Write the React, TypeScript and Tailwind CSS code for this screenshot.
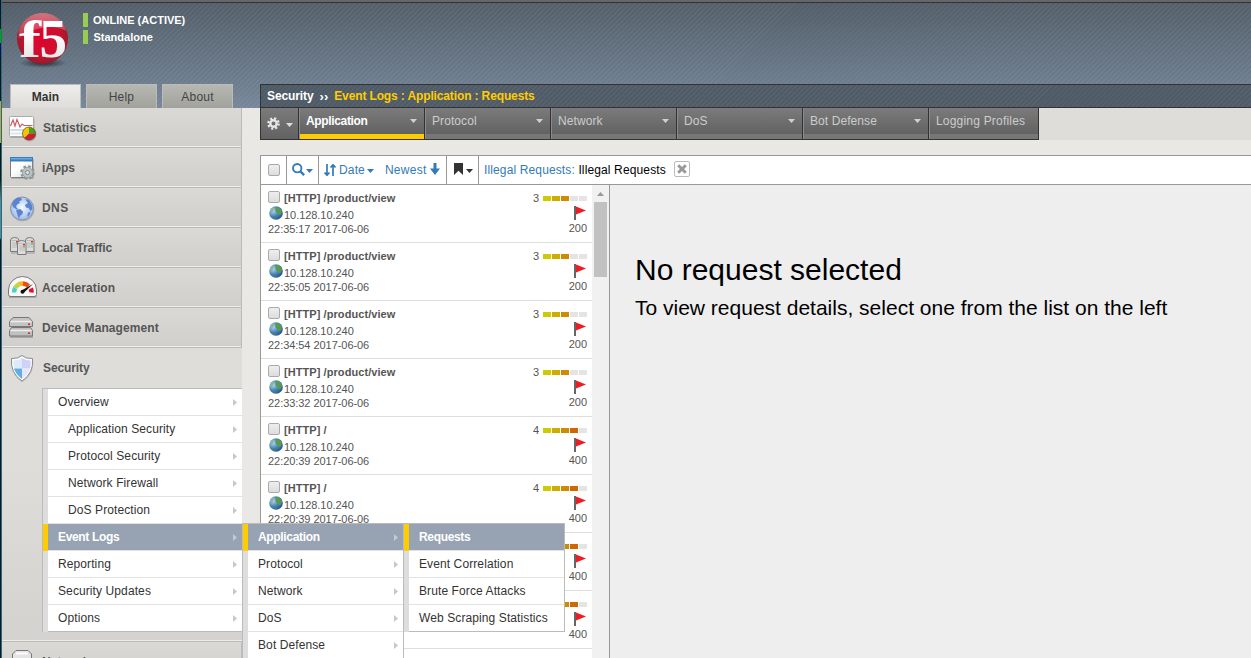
import React from "react";

const FONT = "font-['Liberation_Sans',Arial,sans-serif]";

function Logo() {
  return (
    <svg width="56" height="58" viewBox="0 0 56 58" className="block overflow-visible">
      <defs>
        <radialGradient id="ball" cx="50%" cy="48%" r="55%">
          <stop offset="0" stopColor="#e2002b" />
          <stop offset="0.6" stopColor="#cd1030" />
          <stop offset="0.9" stopColor="#a01a2c" />
          <stop offset="1" stopColor="#7c2430" />
        </radialGradient>
        <linearGradient id="gloss" x1="0" y1="0" x2="0" y2="1">
          <stop offset="0" stopColor="#fff" stopOpacity="0.4" />
          <stop offset="1" stopColor="#fff" stopOpacity="0.12" />
        </linearGradient>
        <linearGradient id="mark" x1="0" y1="0" x2="0" y2="1">
          <stop offset="0.4" stopColor="#fff" />
          <stop offset="1" stopColor="#dcdcdc" />
        </linearGradient>
        <radialGradient id="ballShadow">
          <stop offset="0" stopColor="#1d242b" stopOpacity="0.9" />
          <stop offset="1" stopColor="#1d242b" stopOpacity="0" />
        </radialGradient>
      </defs>
      <ellipse cx="28" cy="51" rx="24" ry="5" fill="url(#ballShadow)" />
      <circle cx="27.5" cy="26.5" r="25.5" fill="url(#ball)" />
      <path d="M3.500 19A25 25 0 0 1 51.500 19Q40 13 27 16Q13 18 3.500 27Z" fill="url(#gloss)" />
      <g fill="url(#mark)" fontFamily="Liberation Serif" fontWeight="700">
        <text x="4" y="44.500" fontSize="52" textLength="22" lengthAdjust="spacingAndGlyphs">f</text>
        <text x="24.500" y="44.500" fontSize="54" textLength="27.500" lengthAdjust="spacingAndGlyphs">5</text>
      </g>
    </svg>
  );
}

function StatisticsIcon() {
  return (
    <svg width="30" height="30" viewBox="0 0 30 30">
      <rect x="2" y="3" width="24.500" height="20" rx="1" fill="#00000030" />
      <rect x="1.500" y="1.500" width="24" height="20" rx="1" fill="#fff" stroke="#aaa" />
      <rect x="2.500" y="14" width="22" height="2" fill="#cfdcea" />
      <rect x="2.500" y="17.500" width="13" height="2" fill="#dbe5ef" />
      <path d="M2.500 11L5 5L7 11L9 4.500L12 12L14 9L16 10.500H24.500" fill="none" stroke="#cc5b64" strokeWidth="1.200" />
      <circle cx="21.500" cy="19.500" r="7" fill="#00000030" />
      <path d="M21 18.500V12a6.500 6.500 0 0 0-4.600 11.100Z" fill="#f2c500" />
      <path d="M21 18.500V12a6.500 6.500 0 0 1 6.500 6.500Z" fill="#43a512" />
      <path d="M21 18.500h6.500a6.500 6.500 0 0 1-11.100 4.600Z" fill="#cf1b36" />
      <circle cx="21" cy="18.500" r="6.500" fill="none" stroke="#6a4a1a" strokeWidth="0.700" />
    </svg>
  );
}

function AppsIcon() {
  return (
    <svg width="30" height="30" viewBox="0 0 30 30">
      <defs>
        <linearGradient id="win" x1="0" y1="0" x2="1" y2="1">
          <stop offset="0.4" stopColor="#fff" />
          <stop offset="1" stopColor="#d5dbe2" />
        </linearGradient>
      </defs>
      <rect x="3" y="4" width="23" height="20" rx="1" fill="#00000028" />
      <rect x="2.500" y="2.500" width="22" height="20" rx="1" fill="url(#win)" stroke="#808080" />
      <rect x="2" y="2" width="23" height="4.500" fill="#3a7cc0" />
      <rect x="3" y="3" width="21" height="1.500" fill="#69a9e0" />
      <circle cx="19.500" cy="17.500" r="6" fill="none" stroke="#8b9696" strokeWidth="2.600" strokeDasharray="2.500 2.210" />
      <circle cx="19.500" cy="17.500" r="5.200" fill="#b9c3c3" stroke="#98a3a3" />
      <circle cx="19.500" cy="17.500" r="2" fill="#e3e6e6" stroke="#7a8585" />
    </svg>
  );
}

function DnsIcon() {
  return (
    <svg width="30" height="30" viewBox="0 0 30 30">
      <defs>
        <radialGradient id="dns" cx="50%" cy="45%">
          <stop offset="0" stopColor="#f6faff" />
          <stop offset="1" stopColor="#a3c0ee" />
        </radialGradient>
      </defs>
      <circle cx="14.500" cy="14.500" r="12" fill="#0002" />
      <circle cx="14" cy="13.500" r="11.500" fill="url(#dns)" stroke="#8a90a4" />
      <g fill="#5b83d2">
        <path d="M4 9L6 5L9 3L13 3L14 5L11 6.500L12 8L9 9.500L8 12L10 14L8.500 14.500L5 12Z" />
        <path d="M8 15L12 14L15 16.500L14.500 19L12 21L11 24L9.500 20Z" />
        <path d="M17 4L21 5L24 10L24.500 14L22.500 16L20.500 13L18 12.500L17 10L20 8Z" />
        <path d="M20 18L22.500 16.500L21.500 20L19 22Z" />
      </g>
    </svg>
  );
}

function ServerCase({ x, y }: { x: number; y: number }) {
  return (
    <g transform={`translate(${x} ${y})`}>
      <path d="M0.500 3Q1 0.500 4.500 0.500Q8.500 0.500 9 3V14.500H0.500Z" fill="#dcdcdc" stroke="#7a7a7a" />
      <path d="M1.500 3.500h7M2 6h4M2 8h6M2 10h6" stroke="#b0b0b0" strokeWidth="0.800" />
      <rect x="6" y="4" width="2" height="1.500" fill="#e03040" />
      <rect x="6" y="6" width="2" height="1.500" fill="#79c35a" />
    </g>
  );
}

function TrafficIcon() {
  return (
    <svg width="30" height="30" viewBox="0 0 30 30">
      <rect x="3" y="16" width="24" height="3" fill="#00000022" />
      <ServerCase x={2} y={2} />
      <ServerCase x={17} y={2} />
      <ServerCase x={9} y={5} />
    </svg>
  );
}

function GaugeIcon() {
  return (
    <svg width="30" height="30" viewBox="0 0 30 30">
      <path d="M1 22h27.500" stroke="#0003" strokeWidth="2" />
      <path d="M0.500 19.500V15A14 13.500 0 0 1 28.500 15V19.500Q28.500 21.500 26 21.500H3Q0.500 21.500 0.500 19.500Z" fill="#f8f8f8" stroke="#777" />
      <g fill="none" strokeWidth="4.500">
        <path d="M6 17.500a8.700 8.700 0 0 1 1.200-4.500" stroke="#4fcfc4" />
        <path d="M7.200 13a8.700 8.700 0 0 1 3.500-3.500" stroke="#b6d84d" />
        <path d="M10.700 9.500a8.700 8.700 0 0 1 4.500-1" stroke="#f5b81d" />
        <path d="M15 8.500a8.700 8.700 0 0 1 5.500 2.600" stroke="#ee4a12" />
        <path d="M22.800 13.500a8.700 8.700 0 0 1 .7 4" stroke="#e0102a" />
      </g>
      <path d="M25 9L13.500 15.500L15.500 18Z" fill="#111" />
      <circle cx="14.500" cy="16.800" r="2" fill="#111" />
    </svg>
  );
}

function DevicesIcon() {
  return (
    <svg width="30" height="30" viewBox="0 0 30 30">
      <path d="M2 22h23" stroke="#0003" strokeWidth="2" />
      <path d="M5 2.500H21L24.500 6.500V11.500H1.500V6.500Z" fill="#c4c4c4" stroke="#777" />
      <path d="M2.500 6.500h21" stroke="#ececec" strokeWidth="1.500" />
      <path d="M3.500 12.500H22.500L24.500 15.500V21H1.500V15.500Z" fill="#c0c0c0" stroke="#777" />
      <path d="M2.500 15.500h21" stroke="#ececec" strokeWidth="1.500" />
      <rect x="20" y="8.500" width="2" height="1.500" fill="#e02030" />
      <rect x="20" y="17.500" width="2" height="1.500" fill="#e02030" />
    </svg>
  );
}

function ShieldIcon() {
  return (
    <svg width="30" height="30" viewBox="0 0 30 30">
      <path d="M14 1.500Q18 5 25 4.500Q27 19 14 27.500Q2 19 4 5" fill="#0002" />
      <path d="M14 0.500Q18 4 24.500 3.500Q26 18 14 26Q2 18 3.500 3.500Q10 4 14 0.500Z" fill="#fbfbfd" stroke="#8b8b92" />
      <path d="M14 3Q10 5.500 5.500 5.500Q5 10 6 13.500H14Z" fill="#dcebf9" />
      <path d="M6 13.500H14V24Q7.500 19 6 13.500Z" fill="#62aee4" />
      <path d="M14 3Q18 5.500 22.500 5.500Q23 10 22 13.500H14Z" fill="#cfd1f8" />
      <path d="M22 13.500H14V24Q20.500 19 22 13.500Z" fill="#e4e4fb" />
    </svg>
  );
}

function NetworkIcon() {
  return (
    <svg width="30" height="30" viewBox="0 0 30 30">
      <path d="M4.500 10V5L8 1.500H20L23.500 5V10Z" fill="#e4e4e4" stroke="#777" />
      <path d="M8 4.500h12" stroke="#fff" strokeWidth="2" />
    </svg>
  );
}

const NAV: { label: string; icon: React.ReactNode; text: string }[] = [
  { label: "Statistics", icon: <StatisticsIcon />, text: "pl-[5px]" },
  { label: "iApps", icon: <AppsIcon />, text: "pl-1 tracking-[-0.1px]" },
  { label: "DNS", icon: <DnsIcon />, text: "pl-1 tracking-[0.4px]" },
  { label: "Local Traffic", icon: <TrafficIcon />, text: "pl-1 tracking-[-0.05px]" },
  { label: "Acceleration", icon: <GaugeIcon />, text: "pl-1 tracking-[0.1px]" },
  { label: "Device Management", icon: <DevicesIcon />, text: "pl-1 tracking-[0.08px]" },
];

function NavItem({ label, icon, text }: { label: string; icon: React.ReactNode; text: string }) {
  return (
    <div className="flex h-10 items-center border-r border-b border-[#bbb] bg-linear-to-b from-[#dad9d5] to-[#d0cfcb] pl-[6px] shadow-[inset_0_-1px_0_#eeedea]">
      <span className="mt-[5px] h-[30px] w-[30px] shrink-0">{icon}</span>
      <span className={`text-[12px] font-bold text-[#555] ${text}`}>{label}</span>
    </div>
  );
}

function Arrow() {
  return (
    <svg width="4" height="7" viewBox="0 0 4 7" className="mt-px shrink-0">
      <path d="M0 0L4 3.500L0 7Z" fill="#c8c8c8" />
    </svg>
  );
}

type RowProps = {
  label: string;
  active?: boolean;
  indent?: boolean;
  arrow?: boolean;
  end?: boolean;
  children?: React.ReactNode;
};

function MenuRow({ label, active, indent, arrow = true, end, children }: RowProps) {
  return (
    <div className={`relative flex h-[27px] border-l-[5px] ${active ? "border-[#fc0]" : "border-[#ddd]"}`}>
      <div
        className={`flex flex-1 items-center justify-between border-b pr-[5px] text-[12px] whitespace-nowrap ${end ? "border-[#bbb]" : "border-[#e2e2e2]"} ${active ? "bg-[#97a3b3] font-bold tracking-[-0.33px] text-white" : "bg-white tracking-[0.1px] text-[#333]"} ${indent ? "pl-5" : "pl-[10px]"}`}
      >
        <span>{label}</span>
        {arrow && <Arrow />}
      </div>
      {children}
    </div>
  );
}

function RequestsMenu() {
  return (
    <div className="absolute -top-px left-[155px] z-30 w-[162px] border border-[#bbb] border-b-0">
      <MenuRow label="Requests" active arrow={false} />
      <MenuRow label="Event Correlation" arrow={false} />
      <MenuRow label="Brute Force Attacks" arrow={false} />
      <MenuRow label="Web Scraping Statistics" arrow={false} end />
    </div>
  );
}

function ApplicationMenu() {
  return (
    <div className="absolute -top-px left-[194px] z-20 w-[162px] border border-[#bbb] border-b-0">
      <MenuRow label="Application" active>
        <RequestsMenu />
      </MenuRow>
      <MenuRow label="Protocol" />
      <MenuRow label="Network" />
      <MenuRow label="DoS" />
      <MenuRow label="Bot Defense" />
    </div>
  );
}

function Sidebar() {
  return (
    <div className="w-60 shrink-0">
      {NAV.map((n) => (
        <NavItem key={n.label} {...n} />
      ))}
      <div className="h-[294px] border-b border-[#bbb] bg-linear-to-b from-[#deddd9] from-40% to-[#d3d2ce] shadow-[inset_0_-1px_0_#eeedea]">
        <div className="flex h-10 items-center pl-[6px]">
          <span className="mt-[3px] h-[30px] w-[30px]">
            <ShieldIcon />
          </span>
          <span className="pl-[5px] text-[12px] font-bold tracking-[-0.1px] text-[#555]">Security</span>
        </div>
        <div className="ml-10 border-t border-l border-[#bbb]">
          <MenuRow label="Overview" />
          <MenuRow label="Application Security" indent />
          <MenuRow label="Protocol Security" indent />
          <MenuRow label="Network Firewall" indent />
          <MenuRow label="DoS Protection" indent />
          <MenuRow label="Event Logs" active>
            <ApplicationMenu />
          </MenuRow>
          <MenuRow label="Reporting" />
          <MenuRow label="Security Updates" />
          <MenuRow label="Options" end />
        </div>
      </div>
      <NavItem label="Network" icon={<NetworkIcon />} text="pl-1" />
    </div>
  );
}

function Caret({ className }: { className: string }) {
  return (
    <svg width="7" height="4" viewBox="0 0 7 4" className={className}>
      <path d="M0 0H7L3.500 4Z" fill="currentColor" />
    </svg>
  );
}

function GearIcon() {
  return (
    <svg width="13" height="13" viewBox="0 0 13 13">
      <circle cx="6.500" cy="6.500" r="5.100" fill="none" stroke="#e6e6e6" strokeWidth="2.400" strokeDasharray="2.100 1.905" />
      <circle cx="6.500" cy="6.500" r="3.200" fill="none" stroke="#e6e6e6" strokeWidth="2.400" />
    </svg>
  );
}

const TABS = ["Application", "Protocol", "Network", "DoS", "Bot Defense"];

function TabStrip() {
  return (
    <div className="flex h-8 bg-[#deddd9]">
      <div className="flex border-b border-l border-[#333] bg-[#777]">
        <div className="flex h-[31px] w-[38px] items-center border-r border-[#333] bg-linear-to-b from-[#7b7b7b] to-[#626262] pl-[6px] text-[#ddd]">
          <GearIcon />
          <Caret className="mt-[3px] ml-[6px]" />
        </div>
        {TABS.map((t, i) => (
          <div key={t} className="flex h-[31px] w-[126px] flex-col border-r border-l border-r-[#333] border-l-[#8a8a8a]">
            <div className="flex h-[26px] items-center justify-between bg-linear-to-b from-[#7b7b7b] to-[#626262] pr-[7px] pl-[6px] text-[#d0d0d0]">
              <span className={`text-[12px] ${i === 0 ? "font-bold tracking-[-0.35px] text-white" : "tracking-[0.08px] text-[#ccc]"}`}>{t}</span>
              <Caret className="" />
            </div>
            <div className={`h-[5px] ${i === 0 ? "bg-[#fc0]" : "bg-[#777]"}`} />
          </div>
        ))}
        <div className="h-[31px] w-[110px] border-r border-l border-r-[#333] border-l-[#8a8a8a]">
          <div className="flex h-[26px] items-center bg-linear-to-b from-[#7b7b7b] to-[#626262] pl-[6px] text-[12px] text-[#ccc] whitespace-nowrap">
            <span className="tracking-[0.2px]">Logging Profiles</span>
          </div>
        </div>
      </div>
    </div>
  );
}

function Checkbox({ className = "" }: { className?: string }) {
  return <span className={`block h-3 w-3 shrink-0 rounded-[2px] border border-[#aaa] bg-linear-to-b from-[#eee] to-[#ddd] ${className}`} />;
}

function Toolbar() {
  return (
    <div className="flex h-[30px] border border-r-0 border-[#999] bg-white text-[12px] text-[#337ab7]">
      <div className="flex w-[26px] items-center border-r border-[#999] pl-[7px]">
        <Checkbox />
      </div>
      <div className="flex w-8 items-center border-r border-[#999] pl-[5px]">
        <svg width="13" height="13" viewBox="0 0 12 12" className="-mt-[2px]">
          <circle cx="4.800" cy="4.800" r="3.900" fill="none" stroke="currentColor" strokeWidth="1.700" />
          <path d="M7.500 7.500L11.200 11.200" stroke="currentColor" strokeWidth="2.100" />
        </svg>
        <Caret className="mt-[2px] ml-[0.5px]" />
      </div>
      <div className="flex w-32 items-center border-r border-[#999] pl-[5px]">
        <svg width="12" height="12" viewBox="0 0 12 12" fill="none" stroke="currentColor" strokeWidth="1.700" className="-mt-px">
          <path d="M3 0V11M0.500 8.500L3 11.200L5.500 8.500M9 12V1M6.500 3.500L9 0.800L11.500 3.500" />
        </svg>
        <span className="pl-[3px] tracking-[0.15px]">Date</span>
        <Caret className="mt-[2px] ml-[2.5px]" />
        <span className="pl-[10.5px] tracking-[0.25px]">Newest</span>
        <svg width="10" height="12" viewBox="0 0 10 12" className="-mt-[2px] ml-1">
          <path d="M3.500 0H6.500V5.500H10L5 12L0 5.500H3.500Z" fill="currentColor" />
        </svg>
      </div>
      <div className="flex w-8 items-center border-r border-[#999] pl-[7px] text-[#333]">
        <svg width="9" height="12" viewBox="0 0 9 12" className="-mt-[3px]">
          <path d="M0 0H9V12L4.500 7.800L0 12Z" fill="currentColor" />
        </svg>
        <Caret className="mt-[2px] ml-[2.5px]" />
      </div>
      <div className="flex items-center pl-[5px] whitespace-pre">
        <span className="tracking-[0.13px]">Illegal Requests: </span>
        <span className="tracking-[0.13px] text-black">Illegal Requests</span>
        <span className="-mt-[2px] ml-2 flex h-4 w-4 items-center justify-center rounded-[2px] border border-[#bbb]">
          <svg width="10" height="10" viewBox="0 0 10 10">
            <path d="M1.200 1.200L8.800 8.800M8.800 1.200L1.200 8.800" stroke="#999" strokeWidth="3" />
          </svg>
        </span>
      </div>
    </div>
  );
}

function GlobeIcon() {
  return (
    <svg width="14" height="14" viewBox="0 0 14 14" className="block">
      <defs>
        <radialGradient id="earth" cx="30%" cy="35%" r="75%">
          <stop offset="0" stopColor="#b4d6f2" />
          <stop offset="0.5" stopColor="#4c88c6" />
          <stop offset="1" stopColor="#23508e" />
        </radialGradient>
      </defs>
      <circle cx="7" cy="7" r="6.800" fill="url(#earth)" />
      <path d="M6.500 1Q9 0.500 11 2L13 5L12 8.500L9.500 9.500L8.500 7L6.500 5.500Z" fill="#5a9a50" />
      <path d="M1.500 5L3.500 2.500L5 3L3.500 6L2 7.500Z" fill="#8cb97c" />
      <path d="M4 10L6.500 10.500L7 13L5 12.500Z" fill="#4a8650" />
    </svg>
  );
}

const REQUESTS = [
  { path: "/product/view", time: "22:35:17 2017-06-06", level: 3, code: 200 },
  { path: "/product/view", time: "22:35:05 2017-06-06", level: 3, code: 200 },
  { path: "/product/view", time: "22:34:54 2017-06-06", level: 3, code: 200 },
  { path: "/product/view", time: "22:33:32 2017-06-06", level: 3, code: 200 },
  { path: "/", time: "22:20:39 2017-06-06", level: 4, code: 400 },
  { path: "/", time: "22:20:39 2017-06-06", level: 4, code: 400 },
  { path: "/", time: "", level: 4, code: 400 },
  { path: "/", time: "", level: 4, code: 400 },
  { path: "/", time: "", level: 4, code: 400 },
];

const LEVELS = ["bg-[#cc0]", "bg-[#cfac00]", "bg-[#cf8a00]", "bg-[#cf6800]", "bg-[#c00]"];

function RequestRow({ path, time, level, code }: (typeof REQUESTS)[number]) {
  return (
    <div className="flex h-[58px] shrink-0 justify-between border-b border-[#ddd] bg-white pr-[5px] pl-[7px] text-[11px] text-[#555]">
      {time ? (
        <div className="pt-[6px]">
          <div className="flex h-[14px] items-center">
            <Checkbox className="-mt-[2px]" />
            <span className="pl-1 font-bold tracking-[0.07px] whitespace-nowrap">[HTTP] {path}</span>
          </div>
          <div className="flex h-[17px] items-center">
            <span className="-mt-px ml-px">
              <GlobeIcon />
            </span>
            <span className="pt-[3px] pl-px tracking-[-0.05px]">10.128.10.240</span>
          </div>
          <div className="h-[14px] leading-[15px] tracking-[-0.05px]">{time}</div>
        </div>
      ) : (
        <div />
      )}
      <div className="flex flex-col items-end pt-[6px]">
        <div className="flex h-[14px] items-center">
          <span className="pr-1">{level}</span>
          <div className="mt-px flex gap-px">
            {LEVELS.map((c, i) => (
              <span key={c} className={`block h-[5px] w-2 ${i < level ? c : "bg-[#e4e4e4]"}`} />
            ))}
          </div>
        </div>
        <svg width="12" height="14" viewBox="0 0 12 14" className="mt-px mr-px">
          <path d="M0 0H2V14H0Z" fill="#666" />
          <path d="M2 0.500L12 4.500L2 8.500Z" fill="#ee1c24" />
        </svg>
        <span className="mt-px h-[14px] leading-[15px]">{code}</span>
      </div>
    </div>
  );
}

function Content() {
  return (
    <div className="flex min-h-0 flex-1 border-l border-[#999]">
      <div className="flex w-[331px] shrink-0 flex-col overflow-hidden bg-white">
        {REQUESTS.map((r, i) => (
          <RequestRow key={i} {...r} />
        ))}
      </div>
      <div className="flex w-[18px] shrink-0 flex-col border-r border-[#999] bg-[#f1f1f1] pt-[7px] pl-[2px]">
        <svg width="7" height="4" viewBox="0 0 7 4" className="ml-[3px]">
          <path d="M0 4H7L3.500 0Z" fill="#999" />
        </svg>
        <div className="mt-[6px] h-[75px] w-[13px] bg-[#c1c1c1]" />
      </div>
      <div className="flex-1 bg-[#eee] pl-[25px] text-black">
        <h1 className="pt-[67px] text-[30px] leading-9">No request selected</h1>
        <p className="pt-2 text-[21px] leading-6">To view request details, select one from the list on the left</p>
      </div>
    </div>
  );
}

const STRIPES =
  "bg-[repeating-linear-gradient(135deg,rgba(255,255,255,0.05)_0px,rgba(255,255,255,0.05)_1.2px,transparent_1.4px,transparent_3.54px)]";

function Header() {
  return (
    <div className="h-[108px] bg-linear-to-b from-[#525e69] to-[#768799]">
      <div className={`flex h-full flex-col ${STRIPES}`}>
        <div className="h-[3px] shrink-0 border-b border-[#333] bg-[#666]" />
        <div className="flex flex-1">
          <div className="flex w-[258px] shrink-0 flex-col justify-between">
            <div className="flex pt-[9px] pl-[13px]">
              <Logo />
              <div className="flex flex-col gap-[3px] pt-px pl-3 text-[11px] font-bold text-white">
                <div className="flex h-[14px] items-center border-l-[5px] border-[#9c5] pl-[5px]">ONLINE (ACTIVE)</div>
                <div className="flex h-[14px] items-center border-l-[5px] border-[#9c5] pl-[5.5px]">Standalone</div>
              </div>
            </div>
            <div className="flex gap-[5px] pl-2 text-[12px] text-[#444]">
              <div className="flex h-6 w-[71px] items-center justify-center border border-b-0 border-[#bbb] bg-linear-to-b from-[#eeedeb] to-[#deddd9] font-bold text-[#333]">Main</div>
              <div className="flex h-6 w-[71px] items-center justify-center border border-b-0 border-[#bbb] bg-linear-to-b from-[#b8b8b3] to-[#a2a29d] tracking-[0.2px]">Help</div>
              <div className="flex h-6 w-[71px] items-center justify-center border border-b-0 border-[#bbb] bg-linear-to-b from-[#b8b8b3] to-[#a2a29d] tracking-[0.2px]">About</div>
            </div>
          </div>
          <div className="flex flex-1 items-end">
            <div className="h-6 w-full border border-r-0 border-[#333] bg-[#4f5b67]">
              <div className={`flex h-full items-center pl-[6px] text-[12px] font-bold whitespace-pre text-white ${STRIPES}`}>
                <span className="tracking-[-0.1px]">Security</span>
                <span className="pt-px pl-[6px] text-[13px]">››</span>
                <span className="pl-[6px] tracking-[-0.13px] text-[#fc0]">Event Logs : Application : Requests</span>
              </div>
            </div>
          </div>
        </div>
      </div>
    </div>
  );
}

export default function App() {
  return (
    <div className={`flex h-[658px] w-[1251px] overflow-hidden bg-[#e9e8e4] ${FONT}`}>
      <div className="w-[2px] shrink-0 border-r border-[#1c7474] bg-[linear-gradient(#001030_0,#001030_29px,#0a0_29px,#0a0_43px,#008_43px,#001030_60px,#001030_101px,#c9a040_101px,#c9a040_143px,#001030_143px,#301010_180px,#6080a0_200px,#6080a0_238px,#001030_240px,#001030_100%)]" />
      <div className="flex min-w-0 flex-1 flex-col">
        <Header />
        <div className="flex h-[550px]">
          <Sidebar />
          <div className="ml-[18px] flex min-w-0 flex-1 flex-col">
            <TabStrip />
            <div className="h-[15px] shrink-0" />
            <Toolbar />
            <Content />
          </div>
        </div>
      </div>
    </div>
  );
}
